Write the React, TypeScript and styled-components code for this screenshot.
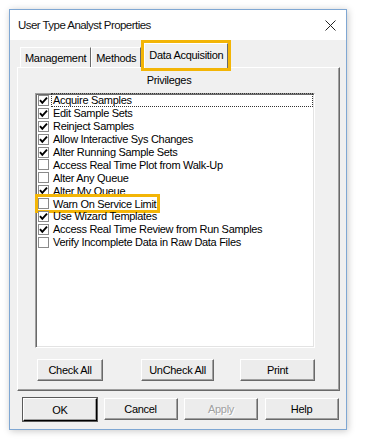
import styled, { createGlobalStyle } from 'styled-components';

const GlobalStyle = createGlobalStyle`
  html, body {
    margin: 0;
    padding: 0;
    background: #ffffff;
  }
  body {
    font-family: "Liberation Sans", Arial, sans-serif;
    font-size: 11px;
    letter-spacing: -0.3px;
    color: #000;
  }
`;

const Page = styled.div`
  padding: 9px 0 0 9px;
  width: 376px;
  height: 440px;
  box-sizing: border-box;
`;

const Window = styled.div`
  width: 338px;
  height: 421px;
  box-sizing: border-box;
  border: 1px solid #7fa7d3;
  box-shadow: 1px 1px 7px rgba(0, 0, 0, 0.22);
  background: #f0f0f0;
  display: flex;
  flex-direction: column;
`;

const TitleBar = styled.div`
  height: 30px;
  background: #ffffff;
  display: flex;
  align-items: center;
  justify-content: space-between;
  padding: 0 10px 0 8px;
  font-family: "Liberation Sans", Arial, sans-serif;
  font-size: 11.5px;
  letter-spacing: -0.55px;
  color: #111;
`;

const TabRow = styled.div`
  height: 27px;
  display: flex;
  align-items: flex-end;
  padding-left: 10px;
`;

const Tab = styled.div<{ $active?: boolean; $mark?: boolean }>`
  height: ${(p) => (p.$active ? 25 : 20)}px;
  display: flex;
  align-items: center;
  padding: 0 ${(p) => (p.$active ? 4 : 4)}px;
  margin: ${(p) => (p.$active ? '0 0 -1px 3px' : '0')};
  padding-bottom: ${(p) => (p.$active ? 3 : 0)}px;
  box-sizing: border-box;
  background: #f0f0f0;
  border-top: 1px solid #ffffff;
  border-left: 1px solid #ffffff;
  border-right: 1px solid #696969;
  position: relative;
  z-index: 1;
  ${(p) => p.$mark && 'outline: 3px solid #f3b506; outline-offset: 0;'}
`;

const Panel = styled.div`
  height: 324px;
  margin: 0 6px 0 7px;
  box-sizing: border-box;
  border-top: 1px solid #ffffff;
  border-left: 1px solid #ffffff;
  border-right: 1px solid #696969;
  border-bottom: 1px solid #696969;
  box-shadow: inset -1px -1px 0 #a0a0a0;
  padding: 0 24px 0 17px;
  display: flex;
  flex-direction: column;
`;

const Caption = styled.div`
  height: 25px;
  line-height: 24px;
  text-align: center;
  padding-right: 12px;
`;

const ListBox = styled.div`
  height: 255px;
  box-sizing: border-box;
  background: #ffffff;
  border-top: 1px solid #a0a0a0;
  border-left: 1px solid #a0a0a0;
  border-right: 1px solid #ffffff;
  border-bottom: 1px solid #ffffff;
  box-shadow: inset 1px 1px 0 #696969, inset -1px -1px 0 #e3e3e3;
  padding: 0 2px 0 2px;
`;

const Row = styled.div`
  height: 12.9px;
  display: flex;
  align-items: center;
`;

const Item = styled.div<{ $mark?: boolean }>`
  display: flex;
  align-items: center;
  height: 13px;
  ${(p) => p.$mark && 'outline: 3px solid #f3b506; outline-offset: 0;'}
`;

const Box = styled.span`
  width: 11px;
  height: 11px;
  box-sizing: border-box;
  border: 1px solid #8a8a8a;
  background: #ffffff;
  display: flex;
  align-items: center;
  justify-content: center;
  flex-shrink: 0;
`;

const Label = styled.span<{ $focus?: boolean }>`
  margin-left: 3px;
  padding: 0 1px;
  line-height: 12px;
  white-space: nowrap;
  ${(p) => p.$focus && 'flex: 1; outline: 1px dotted #333; outline-offset: 0;'}
`;

const ButtonRow = styled.div`
  display: flex;
  justify-content: space-between;
  margin-top: 11px;
  padding-left: 2px;
`;

const Button = styled.button<{ $w: number; $default?: boolean; $disabled?: boolean; $shift?: number }>`
  width: ${(p) => p.$w}px;
  height: ${(p) => (p.$default ? 23 : 22)}px;
  margin-left: ${(p) => p.$shift ?? 0}px;
  box-sizing: border-box;
  font-family: "Liberation Sans", Arial, sans-serif;
  font-size: 11px;
  letter-spacing: -0.3px;
  color: ${(p) => (p.$disabled ? '#a0a0a0' : '#000')};
  text-shadow: ${(p) => (p.$disabled ? '1px 1px 0 #ffffff' : 'none')};
  background: #ececec;
  border-top: 1px solid #ffffff;
  border-left: 1px solid #ffffff;
  border-right: 1px solid ${(p) => (p.$default ? '#000' : '#696969')};
  border-bottom: 1px solid ${(p) => (p.$default ? '#000' : '#696969')};
  box-shadow: inset -1px -1px 0 #a0a0a0 ${(p) => (p.$default ? ', 0 0 0 1px #5a5a5a' : '')};
  padding: 0;
  border-radius: 0;
`;

const Footer = styled.div`
  display: grid;
  grid-template-columns: repeat(4, 1fr);
  gap: 6px;
  padding: 7px 7px 0 13px;
`;

const Check = () => (
  <svg width="9" height="9" viewBox="0 0 9 9">
    <polyline points="1,4.2 3.3,6.8 8,1.6" fill="none" stroke="#000" strokeWidth="1.9" />
  </svg>
);

const Close = () => (
  <svg width="11" height="11" viewBox="0 0 11 11">
    <path d="M0.5 0.5 L10.5 10.5 M10.5 0.5 L0.5 10.5" stroke="#222" strokeWidth="1" />
  </svg>
);

const privileges = [
  { name: 'Acquire Samples', on: true },
  { name: 'Edit Sample Sets', on: true },
  { name: 'Reinject Samples', on: true },
  { name: 'Allow Interactive Sys Changes', on: true },
  { name: 'Alter Running Sample Sets', on: true },
  { name: 'Access Real Time Plot from Walk-Up', on: false },
  { name: 'Alter Any Queue', on: false },
  { name: 'Alter My Queue', on: true },
  { name: 'Warn On Service Limit', on: false, mark: true },
  { name: 'Use Wizard Templates', on: true },
  { name: 'Access Real Time Review from Run Samples', on: true },
  { name: 'Verify Incomplete Data in Raw Data Files', on: false },
];

const App = () => {
  return (
    <Page>
      <GlobalStyle />
      <Window>
        <TitleBar>
          <span>User Type Analyst Properties</span>
          <Close />
        </TitleBar>
        <TabRow>
          <Tab>Management</Tab>
          <Tab>Methods</Tab>
          <Tab $active $mark>
            Data Acquisition
          </Tab>
        </TabRow>
        <Panel>
          <Caption>Privileges</Caption>
          <ListBox>
            {privileges.map((p, i) =>
              p.mark ? (
                <Row key={p.name}>
                  <Item $mark>
                    <Box>{p.on && <Check />}</Box>
                    <Label>{p.name}</Label>
                  </Item>
                </Row>
              ) : (
                <Row key={p.name}>
                  <Box>{p.on && <Check />}</Box>
                  <Label $focus={i === 0}>{p.name}</Label>
                </Row>
              )
            )}
          </ListBox>
          <ButtonRow>
            <Button $w={66}>Check All</Button>
            <Button $w={73} $shift={12}>
              UnCheck All
            </Button>
            <Button $w={75}>Print</Button>
          </ButtonRow>
        </Panel>
        <Footer>
          <Button $w={74} $default>
            OK
          </Button>
          <Button $w={74}>Cancel</Button>
          <Button $w={74} $disabled>
            Apply
          </Button>
          <Button $w={74}>Help</Button>
        </Footer>
      </Window>
    </Page>
  );
};

export default App;
